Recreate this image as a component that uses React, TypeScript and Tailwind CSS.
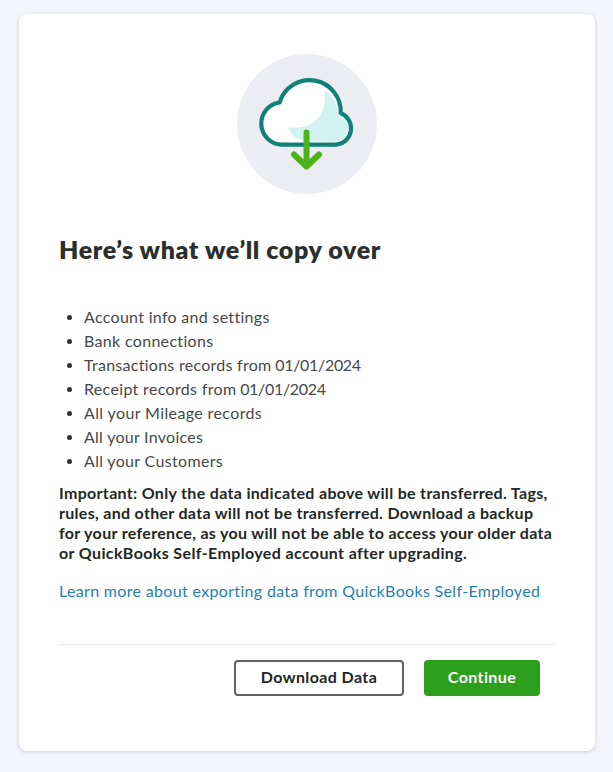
const COPIED_ITEMS = [
  { label: "Account info and settings", tracking: "tracking-[0.3px]" },
  { label: "Bank connections", tracking: "tracking-[0.32px]" },
  { label: "Transactions records from", date: "01/01/2024", tracking: "tracking-[0.27px]" },
  { label: "Receipt records from", date: "01/01/2024", tracking: "tracking-[0.33px]" },
  { label: "All your Mileage records", tracking: "tracking-[0.38px]" },
  { label: "All your Invoices", tracking: "tracking-[0.27px]" },
  { label: "All your Customers", tracking: "tracking-[0.33px]" },
];

const IMPORTANT_LINES = [
  { text: "Important: Only the data indicated above will be transferred. Tags,", tracking: "tracking-[0.32px]" },
  { text: "rules, and other data will not be transferred. Download a backup", tracking: "tracking-[0.3px]" },
  { text: "for your reference, as you will not be able to access your older data", tracking: "tracking-[0.32px]" },
  { text: "or QuickBooks Self-Employed account after upgrading.", tracking: "tracking-[0.37px]" },
];

const CLOUD_PATH =
  "M55 100.7A21.3 21.3 0 0 1 52.7 58.3A31.2 31.2 0 0 1 113.7 69A16.5 16.5 0 0 1 109.5 100.7Z";

function CloudDownload() {
  return (
    <svg viewBox="10 10 140 140" className="size-[140px]" fill="none" aria-hidden>
      <circle cx="80" cy="80" r="70" fill="#ecedf2" />
      <path d={CLOUD_PATH} fill="#fff" />
      <path
        d="M97 46.5C105 51 110.5 59 110.5 69.5L112 72C119 74 121.5 79 121 84C120.5 91 116 97 109 97H81C71 97 64 91 60.5 83.5C76 85 88 81 94 70C98.5 62 98.5 52 97 46.5Z"
        fill="#d0f3f2"
      />
      <path d={CLOUD_PATH} stroke="#108078" strokeWidth="4.2" strokeLinejoin="round" />
      <path
        d="M79.5 88.5V122M67 110.5L79.5 122.5L92 110.5"
        stroke="#4eb31b"
        strokeWidth="6"
        strokeLinecap="round"
        strokeLinejoin="round"
      />
    </svg>
  );
}

export default function App() {
  return (
    <div className="h-[772px] w-[613px] bg-[#f4f5fa] pl-[19px] pt-[14px] font-['Lato',sans-serif] text-[#2b2f2e]">
      <main className="flex h-[737px] w-[576px] flex-col rounded-lg bg-white px-10 pt-10 shadow-[0_1px_4px_rgba(0,0,0,0.16)]">
        <div className="flex justify-center">
          <CloudDownload />
        </div>

        <h1 className="mt-[39px] h-8 whitespace-nowrap text-[25px] leading-8 font-extrabold tracking-[0.6px]">
          Here’s what we’ll copy over
        </h1>

        <ul className="mt-10 text-base leading-6 text-[#46484b]">
          {COPIED_ITEMS.map((item) => (
            <li key={item.label} className="flex items-center whitespace-nowrap">
              <span className="mr-3 ml-2 size-[5px] rounded-full bg-[#303335]" />
              <span className={item.tracking}>
                {item.label}
                {item.date && <span className="tracking-[-0.32px]"> {item.date}</span>}
              </span>
            </li>
          ))}
        </ul>

        <p className="mt-[10px] text-base leading-5 font-bold text-[#232726]">
          {IMPORTANT_LINES.map((line) => (
            <span key={line.text} className={`block whitespace-nowrap ${line.tracking}`}>
              {line.text}
            </span>
          ))}
        </p>

        <a className="mt-[18px] h-5 whitespace-nowrap text-base leading-5 tracking-[0.33px] text-[#2580b4]">
          Learn more about exporting data from QuickBooks Self-Employed
        </a>

        <div className="mt-[43px] flex w-[495px] justify-end gap-5 border-t border-[#e6e8ea] pt-[15px] pr-[14px]">
          <button className="h-9 w-[170px] rounded-[4px] border-2 border-[#606164] pb-0.5 text-base leading-none font-bold tracking-[0.4px] text-[#222526]">
            Download Data
          </button>
          <button className="h-9 w-[116px] rounded-[4px] bg-[#2ca01c] pb-0.5 text-base leading-none font-bold tracking-[0.4px] text-white">
            Continue
          </button>
        </div>
      </main>
    </div>
  );
}
